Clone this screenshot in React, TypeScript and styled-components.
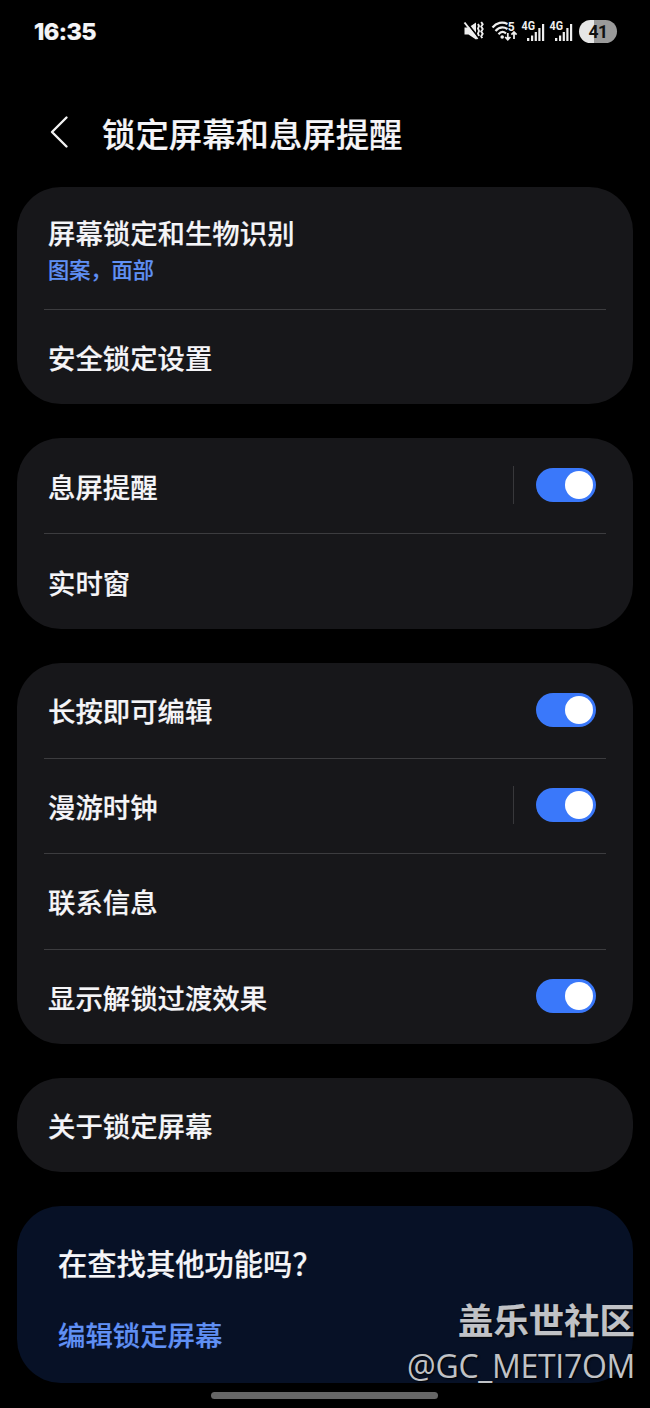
import React from "react";
import styled, { createGlobalStyle } from "styled-components";

const GlobalStyle = createGlobalStyle`
  * { box-sizing: border-box; }
  body {
    margin: 0;
    background: #000;
    color: #f5f5f8;
    font-family: "Noto Sans CJK SC", "Noto Sans", sans-serif;
    font-weight: 500;
    -webkit-text-stroke: 0.2px currentColor;
  }
`;

const Screen = styled.div`
  position: relative;
  width: 650px;
  height: 1408px;
  overflow: hidden;
  background: #000;
  display: flex;
  flex-direction: column;
`;

const StatusBar = styled.header`
  height: 62px;
  padding: 0 33px 0 34px;
  display: flex;
  align-items: center;
  justify-content: space-between;
`;

const Clock = styled.time`
  font: 800 23.5px/30px Inter, sans-serif;
  letter-spacing: -0.6px;
  padding-top: 2px;
`;

const StatusIcons = styled.div`
  display: flex;
  align-items: center;
  -webkit-text-stroke: 0;
`;

const StatusSvg = styled.svg`
  display: block;
  overflow: visible;
`;

const Battery = styled.div`
  width: 38px;
  height: 23px;
  border-radius: 12px;
  background: linear-gradient(90deg, #e6e6e6 0 15px, #9a9a9a 15px);
  color: #111;
  font: 700 17.5px/24px Roboto, sans-serif;
  letter-spacing: -0.5px;
  text-align: center;
`;

const TitleBar = styled.div`
  height: 125px;
  padding: 15px 0 0 48px;
  display: flex;
  align-items: center;
`;

const BackIcon = styled.svg`
  width: 22px;
  height: 34px;
  margin-right: 32px;
`;

const Title = styled.h1`
  margin: 2px 0 0;
  font-size: 33.4px;
  line-height: 44px;
  font-weight: 500;
`;

const Groups = styled.main`
  padding: 0 17px;
  display: flex;
  flex-direction: column;
  gap: 34px;
`;

const Card = styled.section<{ $height: number }>`
  height: ${(p) => p.$height}px;
  border-radius: 44px;
  background: #17171a;
  display: flex;
  flex-direction: column;
`;

const Row = styled.div<{ $grow?: number }>`
  flex: ${(p) => p.$grow ?? 95} 0 0;
  margin: 0 27px;
  padding: 0 10px 1px 4px;
  display: flex;
  align-items: center;
  & + & { border-top: 1px solid #3c3c3f; }
`;

const Labels = styled.div`
  flex: 1;
`;

const Label = styled.div`
  font-size: 27.4px;
  line-height: 38px;
  padding-top: 1px;
`;

const Summary = styled.div`
  color: #6090f4;
  font-size: 21.2px;
  line-height: 34px;
  padding: 1px 0;
  margin-bottom: -5px;
`;

const Separator = styled.span`
  width: 1px;
  height: 38px;
  margin-right: 22px;
  background: #38383b;
`;

const Toggle = styled.span`
  width: 60px;
  height: 34px;
  padding: 3px;
  border-radius: 17px;
  background: #3a78fa;
  display: flex;
  justify-content: flex-end;
  &::after {
    content: "";
    width: 28px;
    height: 28px;
    border-radius: 50%;
    background: #fff;
  }
`;

const Suggestions = styled.section`
  height: 177px;
  border-radius: 44px;
  padding: 33px 41px 0;
  background: #071126;
`;

const Question = styled.h2`
  margin: 0;
  font-size: 29.3px;
  line-height: 46px;
  font-weight: 500;
`;

const EditLink = styled.a`
  display: block;
  margin-top: 28px;
  color: #6090f4;
  font-size: 27.4px;
  line-height: 42px;
`;

const HomeHandle = styled.div`
  width: 227px;
  height: 7px;
  margin: 9px 0 0 211px;
  border-radius: 4px;
  background: #666;
`;

const Watermark = styled.div`
  position: absolute;
  right: 15px;
  bottom: 20px;
  text-align: right;
  color: #c0c2c6;
  text-shadow: 1px 1px 2px #000;
`;

const Community = styled.div`
  font-size: 35.4px;
  line-height: 48px;
  font-weight: 700;
  margin-bottom: 1px;
`;

const Author = styled.div`
  font: 400 32px/44px "Open Sans", sans-serif;
  letter-spacing: -0.3px;
  -webkit-text-stroke: 0;
`;

function MuteIcon() {
  return (
    <StatusSvg width="20" height="20" viewBox="0 0 20 20">
      <path d="M0.500 6.500h4l7.500-5v17l-7.500-5h-4z" fill="#eee" />
      <path d="M1.500 0l13 16.500" stroke="#000" strokeWidth="2" />
      <path d="M0.500 1.500l13 16.500" stroke="#eee" strokeWidth="2" />
      <path d="M14 3l1 2-1 2.500 1 2.500-1 2.500 1 2.500M17.200 1l1.500 2.200-1.500 2.400 1.500 2.400-1.500 2.400 1.500 2.400-1.500 2.400 1 2" fill="none" stroke="#eee" strokeWidth="1.900" />
    </StatusSvg>
  );
}

function WifiIcon() {
  return (
    <StatusSvg width="26" height="20" viewBox="0 0 26 20">
      <g fill="none" stroke="#eee" strokeWidth="2.200">
        <path d="M0.500 6.500C4.500 1.500 10.500 0.500 15.500 3" />
        <path d="M3.500 10C7 6 11.500 5.500 15.500 8" />
        <path d="M6.500 13.200c2.200-2.600 5-2.800 7.500-.8" />
      </g>
      <circle cx="10.200" cy="16" r="1.800" fill="#eee" />
      <text x="15.800" y="10" fill="#eee" fontFamily="Roboto, sans-serif" fontWeight="700" fontSize="12">5</text>
      <path d="M15.800 12v6.500m-2.600-2.500l2.600 2.700 2.600-2.700M22 18v-7m-2.600 2.700l2.600-2.700 2.600 2.700" fill="none" stroke="#eee" strokeWidth="1.800" />
    </StatusSvg>
  );
}

function SignalIcon() {
  return (
    <StatusSvg width="23" height="22" viewBox="0 0 23 22">
      <text x="-0.500" y="9.500" fill="#eee" fontFamily="Roboto, sans-serif" fontWeight="700" fontSize="12" textLength="13.500" lengthAdjust="spacingAndGlyphs">4G</text>
      <g fill="#eee">
        <rect x="5" y="18" width="2.300" height="3" />
        <rect x="9" y="15.500" width="2.200" height="5.500" />
        <rect x="12.700" y="12" width="2.200" height="9" />
        <rect x="16.300" y="8" width="2.200" height="13" />
        <rect x="20" y="4" width="2.200" height="17" />
      </g>
    </StatusSvg>
  );
}

const Spacer = styled.span<{ $w: number }>`
  width: ${(p) => p.$w}px;
`;

interface Item {
  label: string;
  summary?: string;
  toggle?: boolean;
  separated?: boolean;
  grow?: number;
}

const groups: { height: number; items: Item[] }[] = [
  {
    height: 217,
    items: [
      { label: "屏幕锁定和生物识别", summary: "图案，面部", grow: 122 },
      { label: "安全锁定设置", grow: 94 },
    ],
  },
  {
    height: 191,
    items: [{ label: "息屏提醒", toggle: true, separated: true }, { label: "实时窗" }],
  },
  {
    height: 381,
    items: [
      { label: "长按即可编辑", toggle: true },
      { label: "漫游时钟", toggle: true, separated: true },
      { label: "联系信息" },
      { label: "显示解锁过渡效果", toggle: true },
    ],
  },
  { height: 94, items: [{ label: "关于锁定屏幕" }] },
];

export default function App() {
  return (
    <Screen>
      <GlobalStyle />
      <StatusBar>
        <Clock>16:35</Clock>
        <StatusIcons>
          <MuteIcon />
          <Spacer $w={8} />
          <WifiIcon />
          <Spacer $w={4} />
          <SignalIcon />
          <Spacer $w={5} />
          <SignalIcon />
          <Spacer $w={6} />
          <Battery>41</Battery>
        </StatusIcons>
      </StatusBar>
      <TitleBar>
        <BackIcon viewBox="0 0 22 34">
          <path d="M18.500 2.500L4 17l14.500 14.500" fill="none" stroke="#f2f2f2" strokeWidth="2.400" strokeLinecap="round" strokeLinejoin="round" />
        </BackIcon>
        <Title>锁定屏幕和息屏提醒</Title>
      </TitleBar>
      <Groups>
        {groups.map((group) => (
          <Card key={group.height} $height={group.height}>
            {group.items.map((item) => (
              <Row key={item.label} $grow={item.grow}>
                <Labels>
                  <Label>{item.label}</Label>
                  {item.summary && <Summary>{item.summary}</Summary>}
                </Labels>
                {item.separated && <Separator />}
                {item.toggle && <Toggle />}
              </Row>
            ))}
          </Card>
        ))}
        <Suggestions>
          <Question>在查找其他功能吗？</Question>
          <EditLink>编辑锁定屏幕</EditLink>
        </Suggestions>
      </Groups>
      <HomeHandle />
      <Watermark>
        <Community>盖乐世社区</Community>
        <Author>@GC_METI7OM</Author>
      </Watermark>
    </Screen>
  );
}
